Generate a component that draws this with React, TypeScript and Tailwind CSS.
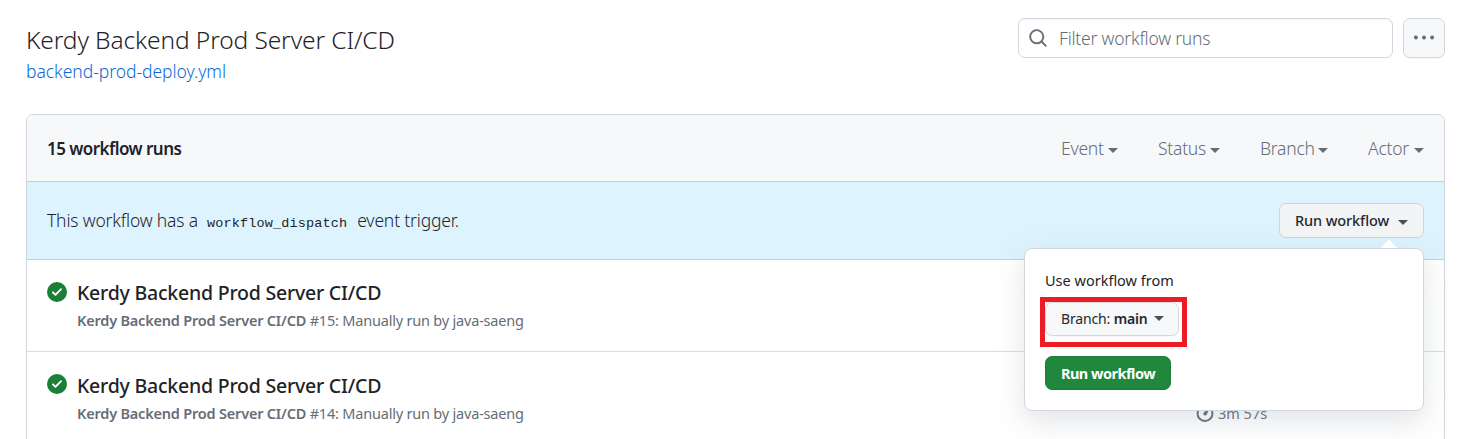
import type { ReactNode } from "react";

type CaretProps = { className?: string };

function Caret({ className = "" }: CaretProps) {
  return (
    <svg width="10" height="5" viewBox="0 0 10 5" fill="currentColor" className={`shrink-0 ${className}`}>
      <path d="M0 0h10L5 5Z" />
    </svg>
  );
}

function SearchIcon() {
  return (
    <svg width="20" height="20" viewBox="0 0 16 16" fill="currentColor" className="shrink-0 text-[#656d76]">
      <path d="M10.68 11.74a6 6 0 0 1-7.922-8.982 6 6 0 0 1 8.982 7.922l3.04 3.04a.749.749 0 0 1-.326 1.275.749.749 0 0 1-.734-.215ZM11.5 7a4.499 4.499 0 1 0-8.997 0A4.499 4.499 0 0 0 11.5 7Z" />
    </svg>
  );
}

function KebabIcon() {
  return (
    <svg width="20" height="20" viewBox="0 0 16 16" fill="currentColor" className="shrink-0">
      <circle cx="1.5" cy="7.5" r="1.6" />
      <circle cx="8" cy="7.5" r="1.6" />
      <circle cx="14.5" cy="7.5" r="1.6" />
    </svg>
  );
}

function CheckIcon() {
  return (
    <svg width="20" height="20" viewBox="0 0 16 16" fill="currentColor" className="shrink-0 text-[#1a7f37]">
      <path d="M8 16A8 8 0 1 1 8 0a8 8 0 0 1 0 16Zm3.78-9.72a.751.751 0 0 0-.018-1.042.751.751 0 0 0-1.042-.018L6.75 9.19 5.28 7.72a.751.751 0 0 0-1.042.018.751.751 0 0 0-.018 1.042l2 2a.75.75 0 0 0 1.06 0Z" />
    </svg>
  );
}

function MeterIcon() {
  return (
    <svg width="18" height="18" viewBox="0 0 18 18" fill="none" className="shrink-0">
      <circle cx="9" cy="8.5" r="7.5" stroke="currentColor" strokeWidth="2" />
      <path d="M13 4.2 10.8 9.6A1.9 1.9 0 1 1 8.1 7Z" fill="currentColor" />
    </svg>
  );
}

function FilterMenu({ label, className }: { label: string; className: string }) {
  return (
    <button className={`flex items-center justify-between text-[17.5px] font-[350] text-[#656d76] ${className}`}>
      <span className="tracking-[-0.25px]">{label}</span>
      <Caret className="mt-[4px]" />
    </button>
  );
}

type RunRowProps = { num: number; className?: string; textClassName: string; children?: ReactNode };

function RunRow({ num, className = "", textClassName, children }: RunRowProps) {
  return (
    <div className={`flex h-[92px] items-start pl-5 ${className}`}>
      <div className="mt-[22px] flex">
        <CheckIcon />
      </div>
      <div className={`ml-[10px] w-[1119px] whitespace-nowrap ${textClassName}`}>
        <div className="text-[19.5px] leading-[30px] font-medium tracking-[-0.22px] text-[#1f2328]">
          Kerdy Backend Prod Server CI/CD
        </div>
        <div className="text-[14.5px] leading-[22px] tracking-[-0.2px] text-[#656d76]">
          <span className="font-semibold">Kerdy Backend Prod Server CI/CD</span> #{num}: Manually run by java-saeng
        </div>
      </div>
      {children}
    </div>
  );
}

function DispatchMenu() {
  return (
    <div className="absolute top-[45px] right-0 z-10 h-[163px] w-[400px] rounded-lg border border-[#d0d7de] bg-white px-5 pt-[19px] shadow-[0_10px_30px_rgba(140,149,159,0.25)]">
      <svg width="18" height="9" viewBox="0 0 18 9" className="absolute -top-[10px] right-[25px]">
        <path d="M.5 9 9 .5l8.500 8.500Z" fill="#fff" />
      </svg>
      <p className="text-[14.5px] leading-[24px] text-[#1f2328]">Use workflow from</p>
      <div className="mt-[5px] -ml-[5px] flex h-[50px] w-[147px] border-[5px] border-[#ed1c24]">
        <button className="flex h-[34px] w-[134px] items-center rounded-[7px] border border-[#d5d8da] bg-[#f6f8fa] pb-[2px] pl-[15px] text-[14px] text-[#24292f] shadow-[0_1px_0_rgba(31,35,40,0.04)]">
          <span className="tracking-[-0.15px] whitespace-pre">
            Branch: <span className="font-semibold">main</span>
          </span>
          <Caret className="ml-[6px] text-[#4b5056]" />
        </button>
      </div>
      <button className="mt-[9px] flex h-[34px] w-[126px] items-center justify-center rounded-[7px] border border-[#1f7f3a] bg-[#1f883d] pt-[2px] text-[14.5px] font-bold tracking-[-0.5px] text-white">
        <span>Run workflow</span>
      </button>
    </div>
  );
}

export default function App() {
  return (
    <div className="h-[439px] overflow-hidden bg-white pr-5 pl-[26px] font-['Noto_Sans',sans-serif] whitespace-nowrap">
      <header className="flex h-[114px] items-start justify-between pt-[18px]">
        <div>
          <h1 className="mt-[4px] text-[24.5px] leading-[36px] font-[350] tracking-[-0.1px] text-[#1f2328]">Kerdy Backend Prod Server CI/CD</h1>
          <a className="block text-[17.5px] leading-[26px] font-[350] tracking-[-0.04px] text-[#0969da]">backend-prod-deploy.yml</a>
        </div>
        <div className="flex gap-[10px]">
          <div className="flex h-10 w-[375px] items-center rounded-[7px] border border-[#d0d7de] pl-[9px] text-[17.5px] font-[350] text-[#656d76] shadow-[inset_0_1px_0_rgba(208,215,222,0.2)]">
            <SearchIcon />
            <span className="ml-[11px] tracking-[-0.22px]">Filter workflow runs</span>
          </div>
          <button className="flex h-10 w-[42px] items-center justify-center rounded-[7px] border border-[#d5d8da] bg-[#f6f8fa] text-[#656d76] shadow-[0_1px_0_rgba(31,35,40,0.04)]">
            <KebabIcon />
          </button>
        </div>
      </header>

      <section className="h-[340px] rounded-t-[7px] border border-[#d0d7de]">
        <div className="flex h-[66px] items-center rounded-t-[6px] bg-[#f6f8fa] pr-5 pl-5">
          <h2 className="mr-auto pt-[2px] text-[17px] font-semibold tracking-[-0.55px] text-[#1f2328]">15 workflow runs</h2>
          <FilterMenu label="Event" className="w-[57px]" />
          <FilterMenu label="Status" className="ml-[40px] w-[62px]" />
          <FilterMenu label="Branch" className="ml-[40px] w-[68px]" />
          <FilterMenu label="Actor" className="ml-[40px] w-[56px]" />
        </div>
        <div className="flex h-[79px] items-center justify-between border-y border-[#a8d8f8] bg-[#ddf4ff] pr-5 pl-5 text-[17.5px] font-[350] text-[#1f2328]">
          <p className="flex items-baseline tracking-[-0.17px]">
            <span>This workflow has a</span>
            <code className="mr-[10px] ml-[9px] font-['Liberation_Mono',monospace] text-[13.5px] font-normal tracking-[0.15px]">workflow_dispatch</code>
            <span>event trigger.</span>
          </p>
          <div className="relative font-normal">
            <button className="flex h-[35px] w-[145px] items-center rounded-[7px] border border-[#d0d4d8] bg-[#f3f4f6] pl-[15px] text-[14.5px] font-medium text-[#24292f]">
              <span className="tracking-[-0.1px]">Run workflow</span>
              <Caret className="mt-[3px] ml-[9px] text-[#4b5056]" />
            </button>
            <DispatchMenu />
          </div>
        </div>
        <RunRow num={15} textClassName="pt-[18px] [&>div+div]:mt-px" className="border-b border-[#d8dee4]" />
        <RunRow num={14} textClassName="pt-[19px] [&>div+div]:mt-px">
          <div className="mt-[52px] flex items-center gap-[4px] text-[14.5px] leading-[20px] text-[#656d76]">
            <MeterIcon />
            <span className="-mt-px">3m 57s</span>
          </div>
        </RunRow>
      </section>
    </div>
  );
}
